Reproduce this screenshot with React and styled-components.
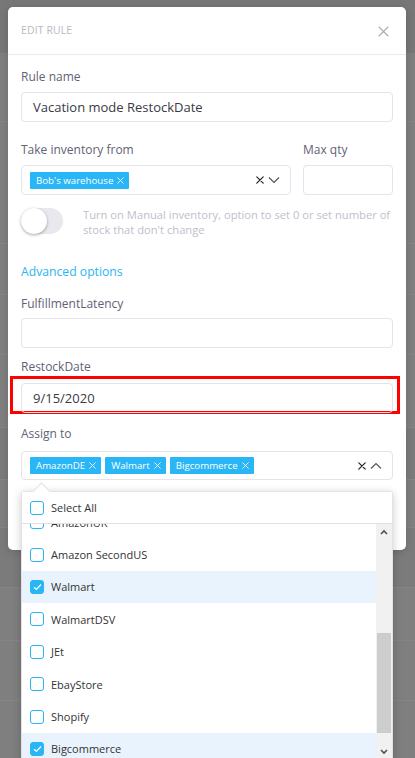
import React from "react";
import styled, { createGlobalStyle } from "styled-components";

const Global = createGlobalStyle`
  html, body { margin: 0; padding: 0; }
  body {
    background: #7f7f7f;
    font-family: "Open Sans", "Noto Sans", sans-serif;
    overflow: hidden;
  }
  * { box-sizing: border-box; }
`;

const Page = styled.div`
  position: relative;
  width: 415px;
  height: 758px;
  overflow: hidden;
  background: #7f7f7f;
`;

const BgTop = styled.div`
  height: 53px;
  background: #777;
`;

const BgRow = styled.div`
  height: ${(p) => p.h}px;
  border-bottom: 1px solid #858585;
  background: ${(p) => (p.dark ? "#7b7b7b" : "#7f7f7f")};
`;

const Modal = styled.div`
  position: absolute;
  left: 8px;
  top: 7px;
  width: 398px;
  height: 543px;
  background: #fff;
  border-radius: 5px;
  box-shadow: 0 2px 8px rgba(0, 0, 0, 0.15);
`;

const Header = styled.div`
  height: 48px;
  border-bottom: 1px solid #e9e9ee;
  display: flex;
  align-items: center;
  justify-content: space-between;
  padding: 0 16px 0 13px;
`;

const Title = styled.div`
  font-size: 10.5px;
  color: #b9b9bf;
  letter-spacing: 0.1px;
  margin-top: -1px;
`;

const CloseBtn = styled.div`
  width: 14px;
  height: 14px;
  display: flex;
  align-items: center;
  justify-content: center;
  margin-top: 2px;
`;

const Body = styled.div`
  padding: 13px 13px 0;
  display: flex;
  flex-direction: column;
`;

const Label = styled.div`
  font-size: 12px;
  color: #626274;
  line-height: 18px;
  margin-bottom: ${(p) => p.mb ?? 6}px;
`;

const Input = styled.div`
  height: 30px;
  border: 1px solid #e3e3ea;
  border-radius: 4px;
  padding: 0 11px;
  display: flex;
  align-items: center;
  font-size: 13px;
  color: #3a3a44;
  margin-bottom: ${(p) => p.mb ?? 0}px;
`;

const Row = styled.div`
  display: flex;
  gap: 12px;
`;

const Col = styled.div`
  display: flex;
  flex-direction: column;
  flex: ${(p) => p.flex ?? 1};
  width: ${(p) => (p.w ? `${p.w}px` : "auto")};
`;

const Select = styled.div`
  height: ${(p) => p.h ?? 30}px;
  border: 1px solid #e3e3ea;
  border-radius: 4px;
  padding: 0 10px 0 8px;
  display: flex;
  align-items: center;
  gap: 4px;
`;

const Tag = styled.div`
  height: 17px;
  background: #29b6f6;
  color: #fff;
  font-size: 9.7px;
  display: flex;
  align-items: center;
  gap: 4px;
  padding: 0 5px 0 6px;
  border-radius: 1px;
`;

const Spacer = styled.div`
  flex: 1;
`;

const Indicators = styled.div`
  display: flex;
  align-items: center;
  gap: 4px;
`;

const ToggleRow = styled.div`
  display: flex;
  gap: 20px;
  margin-top: 13px;
  align-items: flex-start;
`;

const Track = styled.div`
  position: relative;
  flex: none;
  width: 42px;
  height: 26px;
  border-radius: 13px;
  background: #e8e8ee;
`;

const Knob = styled.div`
  position: absolute;
  left: 0;
  top: 0;
  width: 26px;
  height: 26px;
  border-radius: 50%;
  background: #fff;
  box-shadow: 0 1px 3px rgba(0, 0, 0, 0.35);
`;

const Hint = styled.div`
  font-size: 11.2px;
  line-height: 15px;
  color: #c0c0cc;
  margin-top: -1px;
`;

const Link = styled.div`
  font-size: 12.2px;
  color: #2db4f3;
  line-height: 18px;
  margin-top: 26px;
  margin-bottom: 14px;
`;

const Highlight = styled.div`
  margin: 0 -7px 11px -11px;
  border: 3px solid #f00;
  padding: 4px 4px 0 8px;
  height: 38px;
`;

const AssignWrap = styled.div`
  position: relative;
`;

const Dropdown = styled.div`
  position: absolute;
  left: 0;
  top: 40px;
  width: 372px;
  background: #fff;
  border: 1px solid #e2e2e6;
  border-radius: 3px;
  box-shadow: 0 2px 10px rgba(0, 0, 0, 0.2);
  z-index: 5;
`;

const Notch = styled.div`
  position: absolute;
  left: 13px;
  top: -7px;
  width: 13px;
  height: 13px;
  background: #fff;
  border-left: 1px solid #e2e2e6;
  border-top: 1px solid #e2e2e6;
  transform: rotate(45deg);
`;

const SelectAll = styled.div`
  position: relative;
  height: 32px;
  border-bottom: 1px solid #e0e0e0;
  display: flex;
  align-items: center;
  padding-left: 8px;
  gap: 7px;
  font-size: 11px;
  color: #333;
  background: #fff;
`;

const ListArea = styled.div`
  display: grid;
  grid-template-columns: 1fr 16px;
  height: 236px;
`;

const ListClip = styled.div`
  overflow: hidden;
`;

const List = styled.div`
  margin-top: -18px;
`;

const Item = styled.div`
  height: 32.4px;
  display: flex;
  align-items: center;
  gap: 7px;
  padding-left: 8px;
  font-size: 11px;
  color: #333;
  background: ${(p) => (p.checked ? "#e8f3fd" : "#fff")};
`;

const Box = styled.div`
  width: 14px;
  height: 14px;
  border: 1.5px solid #29b6f6;
  border-radius: 3px;
  background: ${(p) => (p.checked ? "#29b6f6" : "#fff")};
  display: flex;
  align-items: center;
  justify-content: center;
  flex: none;
`;

const Scrollbar = styled.div`
  background: #f1f1f1;
  display: grid;
  grid-template-rows: 16px 1fr 16px;
`;

const ArrowCell = styled.div`
  display: flex;
  align-items: center;
  justify-content: center;
`;

const Rail = styled.div`
  display: flex;
  flex-direction: column;
  padding: 0 1px;
`;

const Thumb = styled.div`
  margin-top: ${(p) => p.top}px;
  height: ${(p) => p.h}px;
  background: #cdcdcd;
`;

const X = ({ size = 8, color = "#fff", w = 1.3 }) => (
  <svg width={size} height={size} viewBox="0 0 10 10">
    <path d="M1 1L9 9M9 1L1 9" stroke={color} strokeWidth={w} strokeLinecap="round" />
  </svg>
);

const Chevron = ({ up }) => (
  <svg width="12" height="8" viewBox="0 0 12 8">
    <path
      d={up ? "M1 6.5L6 1.5L11 6.5" : "M1 1.5L6 6.5L11 1.5"}
      stroke="#555"
      strokeWidth="1.2"
      fill="none"
    />
  </svg>
);

const Check = () => (
  <svg width="9" height="8" viewBox="0 0 9 8">
    <path d="M1 4.2L3.4 6.3L8 1.5" stroke="#fff" strokeWidth="1.2" fill="none" />
  </svg>
);

const Tri = ({ up }) => (
  <svg width="8" height="6" viewBox="0 0 8 6">
    <path d={up ? "M1 5L4 2L7 5" : "M1 1L4 4L7 1"} stroke="#505050" strokeWidth="1.6" fill="none" />
  </svg>
);

const items = [
  { name: "AmazonUK" },
  { name: "Amazon SecondUS" },
  { name: "Walmart", checked: true },
  { name: "WalmartDSV" },
  { name: "JEt" },
  { name: "EbayStore" },
  { name: "Shopify" },
  { name: "Bigcommerce", checked: true },
  { name: "AmazonDE", checked: true },
];

export default function App() {
  return (
    <Page>
      <Global />
      <BgTop />
      <BgRow h={69} />
      <BgRow h={122} />
      <BgRow h={51} />
      <BgRow h={60} />
      <BgRow h={73} />
      <BgRow h={52} dark />
      <BgRow h={48} />
      <BgRow h={60} dark />
      <BgRow h={53} />
      <BgRow h={60} />

      <Modal>
        <Header>
          <Title>EDIT RULE</Title>
          <CloseBtn>
            <X size={11} color="#a6a6ae" w={1.2} />
          </CloseBtn>
        </Header>
        <Body>
          <Label>Rule name</Label>
          <Input mb={19}>Vacation mode RestockDate</Input>

          <Row>
            <Col>
              <Label mb={6}>Take inventory from</Label>
              <Select>
                <Tag>
                  Bob's warehouse <X size={7} />
                </Tag>
                <Spacer />
                <Indicators>
                  <X size={8} color="#222" w={1.5} />
                  <Chevron />
                </Indicators>
              </Select>
            </Col>
            <Col flex="none" w={90}>
              <Label mb={6}>Max qty</Label>
              <Input />
            </Col>
          </Row>

          <ToggleRow>
            <Track>
              <Knob />
            </Track>
            <Hint>
              Turn on Manual inventory, option to set 0 or set number of stock that don't change
            </Hint>
          </ToggleRow>

          <Link>Advanced options</Link>

          <Label mb={5}>FulfillmentLatency</Label>
          <Input mb={10}>{""}</Input>

          <Label mb={0}>RestockDate</Label>
          <Highlight>
            <Input>9/15/2020</Input>
          </Highlight>

          <Label mb={8}>Assign to</Label>
          <AssignWrap>
            <Select h={29}>
              <Tag>
                AmazonDE <X size={7} />
              </Tag>
              <Tag>
                Walmart <X size={7} />
              </Tag>
              <Tag>
                Bigcommerce <X size={7} />
              </Tag>
              <Spacer />
              <Indicators>
                <X size={8} color="#222" w={1.5} />
                <Chevron up />
              </Indicators>
            </Select>
            <Dropdown>
              <Notch />
              <SelectAll>
                <Box />
                Select All
              </SelectAll>
              <ListArea>
                <ListClip>
                  <List>
                    {items.map((it) => (
                      <Item key={it.name} checked={it.checked}>
                        <Box checked={it.checked}>{it.checked && <Check />}</Box>
                        {it.name}
                      </Item>
                    ))}
                  </List>
                </ListClip>
                <Scrollbar>
                  <ArrowCell>
                    <Tri up />
                  </ArrowCell>
                  <Rail>
                    <Thumb top={93} h={100} />
                  </Rail>
                  <ArrowCell>
                    <Tri />
                  </ArrowCell>
                </Scrollbar>
              </ListArea>
            </Dropdown>
          </AssignWrap>
        </Body>
      </Modal>
    </Page>
  );
}
